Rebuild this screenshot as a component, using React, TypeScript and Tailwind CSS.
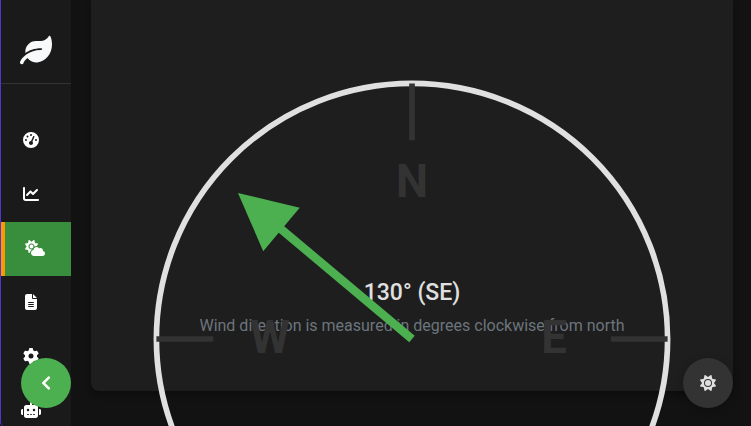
import { FaChevronLeft, FaLeaf } from "react-icons/fa";
import { FaChartLine, FaCloudSun, FaFileLines, FaGaugeHigh, FaGear, FaRobot, FaSun } from "react-icons/fa6";
import type { IconType } from "react-icons";

const links: { label: string; icon: IconType; wide?: boolean; active?: boolean }[] = [
  { label: "Dashboard", icon: FaGaugeHigh },
  { label: "Analytics", icon: FaChartLine },
  { label: "Weather", icon: FaCloudSun, wide: true, active: true },
  { label: "Reports", icon: FaFileLines },
  { label: "Settings", icon: FaGear },
  { label: "Assistant", icon: FaRobot, wide: true },
];

function Sidebar() {
  return (
    <aside className="flex w-[71px] shrink-0 flex-col rounded-bl border-l border-[#4f35d2] bg-[#1a1a1a]">
      <div className="flex h-[84px] shrink-0 items-center border-b border-[#333333] pt-4 pl-[19px]">
        <FaLeaf className="size-8 text-[#f8f9fa]" />
      </div>
      <nav aria-label="Main" className="flex flex-col pt-[30px]">
        {links.map(({ label, icon: Icon, wide, active }) => (
          <a
            key={label}
            href="#"
            aria-label={label}
            className={`flex h-[54px] items-center pb-0.5 text-white ${active ? "border-l-4 border-[#ff9800] bg-[#388e3c]" : ""}`}
          >
            <span className="flex w-[60px] justify-center">
              <Icon className={wide ? "size-5" : "size-4"} />
            </span>
          </a>
        ))}
      </nav>
    </aside>
  );
}

function Compass({ direction }: { direction: number }) {
  return (
    <svg viewBox="0 0 200 200" aria-hidden="true" className="absolute inset-x-[37px] top-[55px]">
      <circle cx="100" cy="100" r="90" fill="none" stroke="#e0e0e0" strokeWidth="2" />
      <path d="M100 10V30M190 100H170M100 190V170M10 100H30" stroke="#333333" strokeWidth="2" />
      <g fill="#333333" fontSize="16" fontWeight="700" textAnchor="middle">
        <text x="100" y="50">N</text>
        <text x="150" y="105">E</text>
        <text x="50" y="105">W</text>
      </g>
      <g transform={`rotate(${direction - 180} 100 100)`}>
        <path d="M100 100V30" stroke="#4caf50" strokeWidth="3" />
        <path d="M100 20L90 40H110Z" fill="#4caf50" />
      </g>
    </svg>
  );
}

export default function App() {
  return (
    <div className="flex h-screen overflow-hidden bg-[#121212] font-['Roboto',sans-serif] text-[#e0e0e0]">
      <Sidebar />
      <main className="min-w-0 flex-1 pr-[18px] pl-5">
        <section className="relative rounded-b-lg bg-[#1e1e1e] px-6 pt-[278px] pb-[53px] text-center shadow-[0_4px_6px_rgba(0,0,0,0.3)]">
          <h2 className="text-[23px] leading-[30px] font-medium">130° (SE)</h2>
          <p className="mt-1.5 text-base leading-6 text-[#6c757d]">Wind direction is measured in degrees clockwise from north</p>
          <Compass direction={130} />
        </section>
      </main>
      <button
        type="button"
        aria-label="Collapse sidebar"
        className="fixed bottom-[18px] left-[21px] flex size-[50px] items-center justify-center rounded-full bg-[#4caf50] text-white"
      >
        <FaChevronLeft className="size-4" />
      </button>
      <button
        type="button"
        aria-label="Toggle theme"
        className="fixed right-[18px] bottom-[18px] flex size-[50px] items-center justify-center rounded-full bg-[#333333] text-[#e0e0e0] shadow-[0_2px_10px_rgba(0,0,0,0.2)]"
      >
        <FaSun className="size-4" />
      </button>
    </div>
  );
}
